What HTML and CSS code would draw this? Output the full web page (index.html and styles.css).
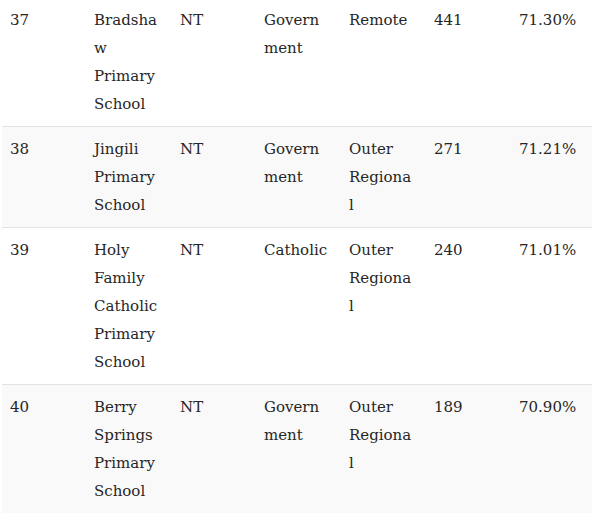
FILE: index.html
```
<!DOCTYPE html>
<html>
<head>
<meta charset="utf-8">
<link rel="stylesheet" href="styles.css">
</head>
<body>
<table class="ranking">
  <colgroup>
    <col class="c1"><col class="c2"><col class="c3"><col class="c4"><col class="c5"><col class="c6"><col class="c7">
  </colgroup>
  <tbody>
    <tr>
      <td>37</td><td>Bradshaw Primary School</td><td>NT</td><td>Government</td><td>Remote</td><td>441</td><td>71.30%</td>
    </tr>
    <tr class="alt">
      <td>38</td><td>Jingili Primary School</td><td>NT</td><td>Government</td><td>Outer Regional</td><td>271</td><td>71.21%</td>
    </tr>
    <tr>
      <td>39</td><td>Holy Family Catholic Primary School</td><td>NT</td><td>Catholic</td><td>Outer Regional</td><td>240</td><td>71.01%</td>
    </tr>
    <tr class="alt">
      <td>40</td><td>Berry Springs Primary School</td><td>NT</td><td>Government</td><td>Outer Regional</td><td>189</td><td>70.90%</td>
    </tr>
  </tbody>
</table>
</body>
</html>
```
FILE: styles.css
```
html, body {
  margin: 0;
  padding: 0;
  background: #ffffff;
}
body {
  padding: 0 2px;
  margin-top: -2px;
}
.ranking {
  width: 590px;
  border-collapse: collapse;
  table-layout: fixed;
  font-family: "DejaVu Serif", serif;
  font-size: 15px;
  line-height: 28px;
  color: #262626;
}
.ranking td {
  vertical-align: top;
  padding: 8px 12px 8px 8px;
  overflow-wrap: break-word;
  word-break: break-word;
  border-bottom: 1px solid #e3e3e3;
}
.ranking tr.alt td {
  background: #f9f9f9;
}
.ranking tr:last-child td {
  border-bottom: none;
}
.c1 { width: 84px; }
.c2 { width: 86px; }
.c3 { width: 84px; }
.c4 { width: 85px; }
.c5 { width: 85px; }
.c6 { width: 85px; }
.c7 { width: 81px; }
```
